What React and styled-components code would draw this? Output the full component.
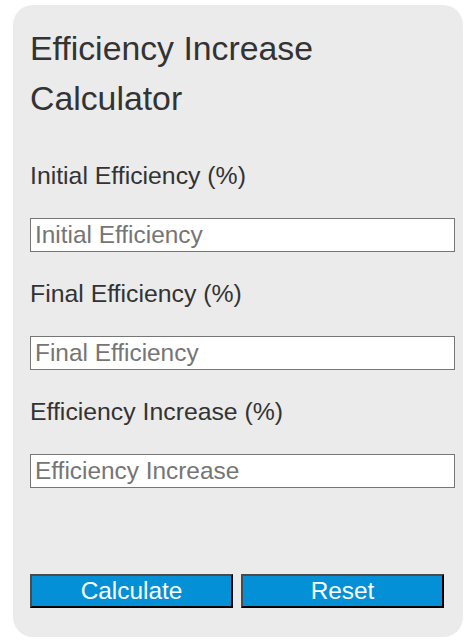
import React from 'react';
import styled, { createGlobalStyle } from 'styled-components';

const GlobalStyle = createGlobalStyle`
  body {
    margin: 0;
    background: #fff;
    font-family: "Liberation Sans", Arial, sans-serif;
  }
`;

const Card = styled.div`
  box-sizing: border-box;
  width: 450px;
  margin: 5px 0 0 13px;
  padding: 18px 8px 29px 17px;
  background: #ebebeb;
  border-radius: 20px;
  color: #333;
`;

const Title = styled.h1`
  margin: 0 0 35px;
  font-size: 33.8px;
  font-weight: normal;
  line-height: 50px;
`;

const Field = styled.div`
  display: flex;
  flex-direction: column;
  margin-top: 24px;
`;

const Label = styled.label`
  font-size: 24.8px;
  line-height: 36px;
  margin-bottom: 24px;
`;

const Input = styled.input`
  box-sizing: border-box;
  width: 425px;
  height: 34px;
  padding: 0 4px;
  border: 1px solid #767676;
  background: #fff;
  font-family: inherit;
  font-size: 24.4px;
  color: #333;

  &::placeholder {
    color: #757575;
  }
`;

const Buttons = styled.div`
  display: flex;
  gap: 8px;
  margin-top: 86px;
`;

const Button = styled.button`
  box-sizing: border-box;
  width: 203px;
  height: 34px;
  padding: 0;
  border: 2px solid;
  border-color: #4a4a4a #000 #000 #4a4a4a;
  background: #0390d7;
  color: #fff;
  font-family: inherit;
  font-size: 24.4px;
  line-height: 30px;
  cursor: pointer;
`;

const fields = [
  { label: 'Initial Efficiency (%)', placeholder: 'Initial Efficiency' },
  { label: 'Final Efficiency (%)', placeholder: 'Final Efficiency' },
  { label: 'Efficiency Increase (%)', placeholder: 'Efficiency Increase' },
];

export default function App() {
  return (
    <>
      <GlobalStyle />
      <Card>
        <Title>Efficiency Increase Calculator</Title>
        {fields.map((f, i) => (
          <Field key={i}>
            <Label>{f.label}</Label>
            <Input type="text" placeholder={f.placeholder} />
          </Field>
        ))}
        <Buttons>
          <Button>Calculate</Button>
          <Button>Reset</Button>
        </Buttons>
      </Card>
    </>
  );
}
